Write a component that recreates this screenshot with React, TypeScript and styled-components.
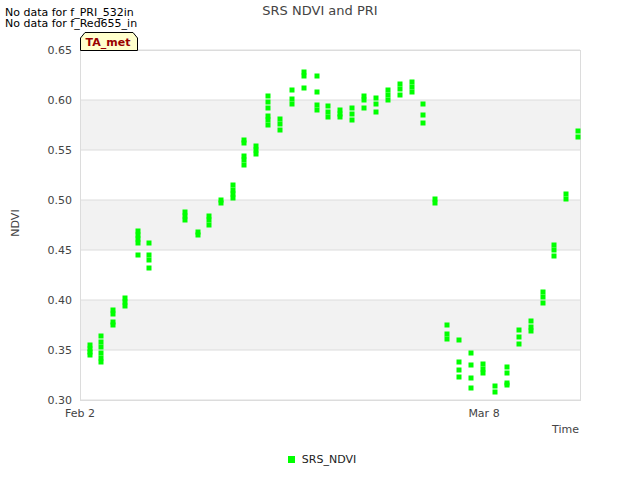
import React from 'react';
import styled, { createGlobalStyle } from 'styled-components';

const GlobalStyle = createGlobalStyle`
  html, body { margin: 0; padding: 0; background: #fff; }
  body { font-family: "DejaVu Sans", sans-serif; }
`;

const Page = styled.div`
  position: relative;
  width: 640px;
  height: 480px;
  overflow: hidden;
  background: #fff;
`;

const Notes = styled.div`
  position: absolute;
  left: 5px;
  top: 7px;
  font-size: 11px;
  line-height: 11px;
  color: #000;
  z-index: 1;
`;

const Legend = styled.div`
  position: absolute;
  left: 0;
  right: 0;
  top: 453px;
  display: flex;
  justify-content: center;
  align-items: center;
  gap: 7px;
  font-size: 11px;
  color: #222;
  padding-left: 4px;
`;

const Swatch = styled.span`
  width: 7px;
  height: 7px;
  background: #00ff00;
`;

// x pixel -> y pixel list, read from the plot
const clusters: [number, number[]][] = [
  [90, [345, 349, 352, 355]],
  [101, [336, 342, 347, 353, 358, 362]],
  [113, [310, 314, 322, 325]],
  [125, [298, 302, 306]],
  [138, [231, 235, 239, 243, 255]],
  [149, [243, 255, 260, 268]],
  [185, [212, 216, 220]],
  [198, [232, 235]],
  [209, [216, 220, 225]],
  [221, [200, 203]],
  [233, [185, 190, 194, 198]],
  [244, [140, 143, 156, 160, 165]],
  [256, [146, 150, 154]],
  [268, [96, 102, 108, 116, 120, 125]],
  [280, [119, 124, 130]],
  [292, [90, 99, 104]],
  [304, [72, 76, 88]],
  [317, [76, 92, 105, 110]],
  [328, [106, 112, 117]],
  [340, [110, 114, 117]],
  [352, [108, 114, 120]],
  [364, [96, 100, 108]],
  [376, [98, 104, 112]],
  [388, [90, 95, 100]],
  [400, [84, 89, 95]],
  [412, [82, 87, 92]],
  [423, [104, 115, 123]],
  [435, [199, 203]],
  [447, [325, 334, 339]],
  [459, [340, 362, 370, 377]],
  [471, [353, 365, 378, 388]],
  [483, [364, 369, 373]],
  [495, [386, 392]],
  [507, [367, 373, 383, 385]],
  [519, [330, 337, 344]],
  [531, [321, 327, 331]],
  [543, [292, 297, 303]],
  [554, [245, 250, 256]],
  [566, [194, 199]],
  [578, [131, 137]],
];

const ticks = [0.65, 0.6, 0.55, 0.5, 0.45, 0.4, 0.35, 0.3];

function App() {
  return (
    <Page>
      <GlobalStyle />
      <Notes>
        <div>No data for f_PRI_532in</div>
        <div>No data for f_Red655_in</div>
      </Notes>
      <svg width="640" height="480" style={{ display: 'block' }} fontFamily="DejaVu Sans, sans-serif">
        <text x="320" y="15" textAnchor="middle" fontSize="13" fill="#444">SRS NDVI and PRI</text>
        {[100, 200, 300].map((y) => (
          <rect key={y} x="80" y={y} width="500" height="50" fill="#f2f2f2" />
        ))}
        {ticks.map((t, i) => (
          <g key={t}>
            <line x1="80" x2="580" y1={50 + i * 50} y2={50 + i * 50} stroke="#dcdcdc" />
            <text x="72" y={54 + i * 50} textAnchor="end" fontSize="11" fill="#444">{t.toFixed(2)}</text>
          </g>
        ))}
        <rect x="80.5" y="50.5" width="500" height="350" fill="none" stroke="#dcdcdc" />
        <text x="80" y="417" textAnchor="middle" fontSize="11" fill="#444">Feb 2</text>
        <text x="484" y="417" textAnchor="middle" fontSize="11" fill="#444">Mar 8</text>
        <text x="579" y="433" textAnchor="end" fontSize="11" fill="#444">Time</text>
        <text x="19" y="223" textAnchor="middle" fontSize="11" fill="#444" transform="rotate(-90 19 223)">NDVI</text>
        {clusters.map(([x, ys]) =>
          ys.map((y, j) => <rect key={`${x}-${j}`} x={x - 2.5} y={y - 2.5} width="5" height="5" fill="#00ff00" />)
        )}
        <path d="M80.5 50.5 V38 L85 32.5 H133 L137.5 38 V50.5 Z" fill="#ffffcc" stroke="#000" strokeWidth="1" />
        <text x="108" y="46" textAnchor="middle" fontSize="11" fontWeight="bold" fill="#990000">TA_met</text>
      </svg>
      <Legend>
        <Swatch />
        <span>SRS_NDVI</span>
      </Legend>
    </Page>
  );
}

export default App;
